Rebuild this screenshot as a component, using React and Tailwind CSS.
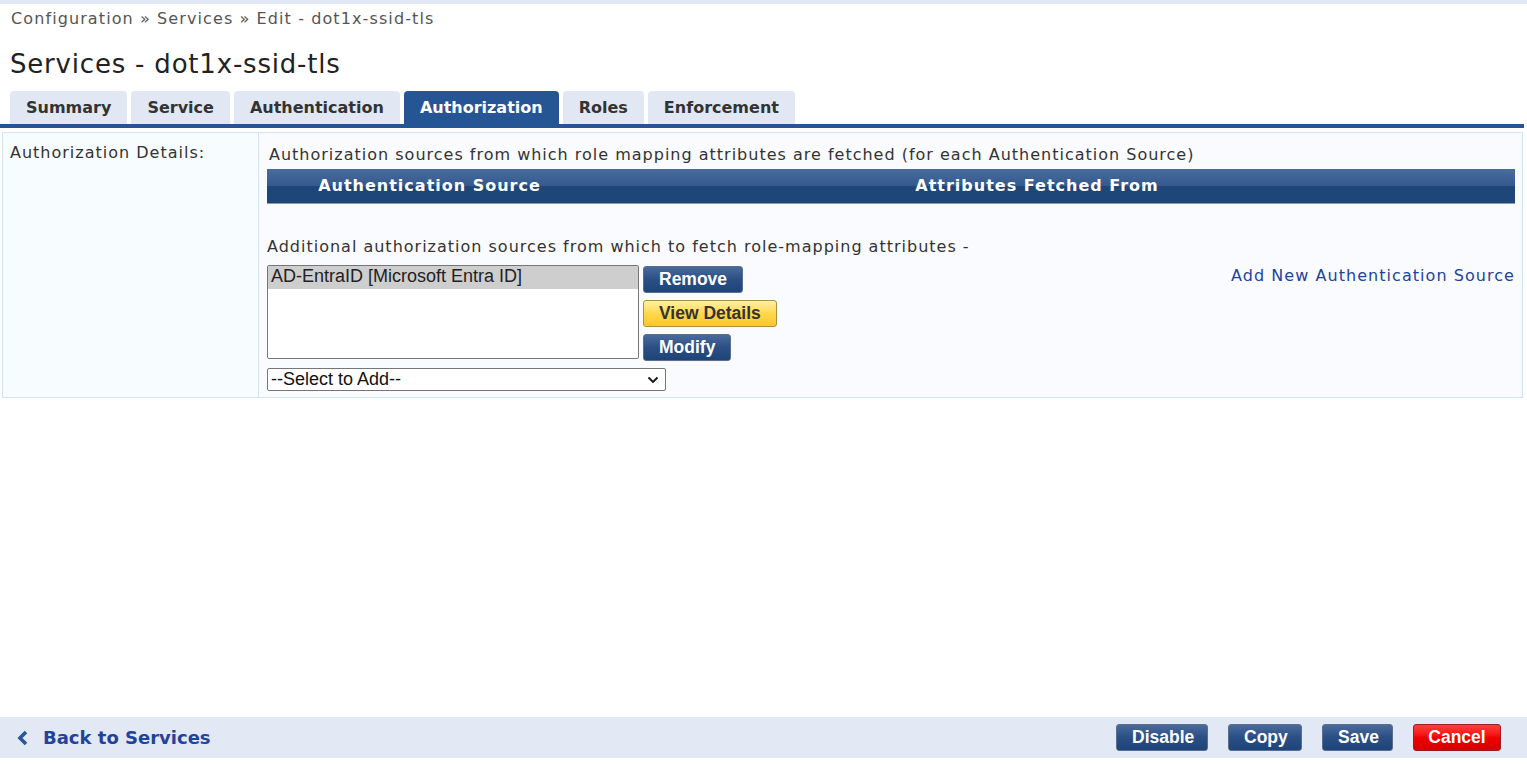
import React from 'react';

const tabs = ['Summary', 'Service', 'Authentication', 'Authorization', 'Roles', 'Enforcement'];

function BlueButton({ children, className = '' }) {
  return (
    <button
      className={`h-[27px] px-[15px] rounded-[3px] border border-[#5a6f8f] bg-gradient-to-b from-[#4a6a9c] via-[#2a4f85] to-[#1d4479] text-white font-bold text-[17.5px] leading-none ${className}`}
      style={{ fontFamily: '"Liberation Sans", Arial, sans-serif' }}
    >
      {children}
    </button>
  );
}

export default function App() {
  return (
    <div
      className="w-[1527px] h-[764px] bg-white flex flex-col text-[#333]"
      style={{ fontFamily: '"DejaVu Sans", Verdana, sans-serif' }}
    >
      <div className="h-[4px] bg-[#e3e9f4]" />

      <div className="px-[11px] pt-[4px] text-[16px] tracking-[1.1px] text-[#555] leading-[22px]">
        Configuration » Services » Edit - dot1x-ssid-tls
      </div>
      <h1 className="px-[10px] mt-[19px] text-[26px] tracking-[0.8px] leading-[30px] text-[#222]">Services - dot1x-ssid-tls</h1>

      {/* tabs */}
      <div className="mt-[12px] px-[10px] flex items-end gap-[4px]">
        {tabs.map((t) => (
          <div
            key={t}
            className={`h-[33px] px-[16px] flex items-center rounded-t-[4px] text-[16px] font-bold ${
              t === 'Authorization' ? 'bg-[#265596] text-white' : 'bg-[#e1e8f3] text-[#333]'
            }`}
          >
            {t}
          </div>
        ))}
      </div>
      <div className="h-[4px] bg-[#265596] mr-[3px]" />

      {/* content */}
      <div className="mt-[4px] mx-[2px] mr-[4px] border border-[#d3e2f7] flex text-[16px] tracking-[1px]">
        <div className="w-[256px] shrink-0 bg-[#f7fdff] border-r border-[#d3e2f7] px-[7px] pt-[8px]">
          Authorization Details:
        </div>
        <div className="flex-1 bg-[#fafbff] pl-[8px] pr-[7px] pt-[12px] pb-[6px]">
          <div className="pl-[2px] leading-[20px]">
            Authorization sources from which role mapping attributes are fetched (for each Authentication Source)
          </div>
          <div className="mt-[4px] h-[35px] flex text-white font-bold bg-gradient-to-b from-[#4a6c9f] from-0% via-[#34598d] via-50% to-[#1f4679] to-50% border-b border-[#8a9ab0]">
            <div className="w-[325px] flex items-center justify-center">Authentication Source</div>
            <div className="w-[890px] flex items-center justify-center">Attributes Fetched From</div>
          </div>

          <div className="mt-[33px] leading-[20px]">
            Additional authorization sources from which to fetch role-mapping attributes -
          </div>

          <div className="mt-[8px] flex items-start tracking-normal">
            <div
              className="w-[372px] h-[94px] border border-[#767676] rounded-[2px] bg-white text-[18px] text-[#222]"
              style={{ fontFamily: '"Liberation Sans", Arial, sans-serif' }}
            >
              <div className="bg-[#cecece] px-[3px] h-[23px] leading-[21px]">AD-EntraID [Microsoft Entra ID]</div>
            </div>
            <div className="ml-[4px] flex flex-col items-start gap-[7px] pt-[1px]">
              <BlueButton>Remove</BlueButton>
              <button
                className="h-[27px] px-[15px] rounded-[3px] border border-[#a89040] bg-gradient-to-b from-[#fff0a0] via-[#ffd84a] to-[#ffc629] text-[#333] font-bold text-[17.5px] leading-none"
                style={{ fontFamily: '"Liberation Sans", Arial, sans-serif' }}
              >
                View Details
              </button>
              <BlueButton>Modify</BlueButton>
            </div>
            <div className="ml-auto mt-[-1px] text-[16px] tracking-[1.05px] text-[#22439a]">Add New Authentication Source</div>
          </div>

          <div
            className="mt-[7px] w-[399px] h-[23px] border border-[#767676] rounded-[2px] bg-white flex items-center justify-between pl-[3px] pr-[6px] text-[18px] tracking-normal text-[#111]"
            style={{ fontFamily: '"Liberation Sans", Arial, sans-serif' }}
          >
            <span>--Select to Add--</span>
            <svg width="12" height="8" viewBox="0 0 12 8" fill="none" stroke="#111" strokeWidth="1.8">
              <path d="M1.5 1.5 L6 6 L10.5 1.5" />
            </svg>
          </div>
        </div>
      </div>

      <div className="flex-1" />

      {/* footer */}
      <div className="mb-[6px] h-[41px] bg-[#e3e9f4] flex items-center pl-[17px] pr-[26px]">
        <svg width="12" height="16" viewBox="0 0 12 16" className="mr-[14px]">
          <path d="M9 2 L3 8 L9 14" fill="none" stroke="#2a5896" strokeWidth="3.6" />
        </svg>
        <span className="text-[18px] font-bold text-[#22439a]">Back to Services</span>
        <div className="ml-auto flex items-center gap-[20px]">
          <BlueButton className="w-[92px] px-0">Disable</BlueButton>
          <BlueButton className="w-[74px] px-0">Copy</BlueButton>
          <BlueButton className="w-[71px] px-0">Save</BlueButton>
          <button
            className="w-[88px] h-[27px] rounded-[3px] border border-[#9a2020] bg-gradient-to-b from-[#ff3b3b] via-[#f00000] to-[#d40000] text-white font-bold text-[17.5px] leading-none"
            style={{ fontFamily: '"Liberation Sans", Arial, sans-serif' }}
          >
            Cancel
          </button>
        </div>
      </div>
    </div>
  );
}
